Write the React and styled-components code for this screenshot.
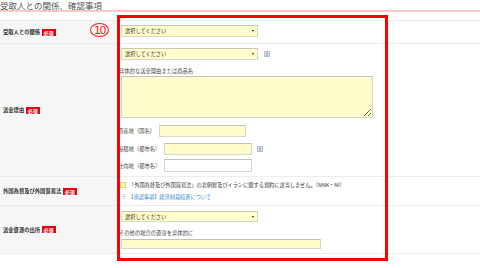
import React from "react";
import styled, { createGlobalStyle } from "styled-components";

const GlobalStyle = createGlobalStyle`
  html, body {
    margin: 0;
    padding: 0;
    background: #fff;
  }
  body {
    font-family: "Noto Sans CJK JP", "Noto Sans", sans-serif;
    color: #333;
  }
`;

const Page = styled.div`
  position: relative;
  width: 480px;
  height: 268px;
  overflow: hidden;
  background: #fff;
`;

const Title = styled.h2`
  margin: 0;
  height: 12px;
  box-sizing: border-box;
  border-bottom: 2px solid #f6c9c9;
  font-size: 8.5px;
  line-height: 10px;
  font-weight: 400;
  color: #555;
  white-space: nowrap;
`;

const Table = styled.div`
  margin-top: 8px;
  border-top: 1px solid #ececec;
`;

const Row = styled.div`
  display: grid;
  grid-template-columns: 118px 1fr;
  border-bottom: 1px solid #ececec;
`;

const Label = styled.div`
  display: flex;
  align-items: center;
  gap: 1.5px;
  padding-left: 3px;
  background: #f6f6f6;
  font-size: 5.3px;
  font-weight: 700;
  color: #333;
  white-space: nowrap;
`;

const Badge = styled.span`
  display: inline-block;
  background: #e60012;
  color: #fff;
  font-size: 5px;
  line-height: 7px;
  padding: 0 2px;
  font-weight: 700;
`;

const Cell = styled.div`
  display: flex;
  flex-direction: column;
  align-items: flex-start;
  padding: ${(p) => p.$pad || "4px 0 4px 3px"};
  font-size: 5.3px;
`;

const Line = styled.div`
  display: flex;
  align-items: center;
  gap: ${(p) => p.$gap || "6px"};
  margin-top: ${(p) => p.$mt || "0px"};
`;

const SelectBox = styled.div`
  position: relative;
  box-sizing: border-box;
  width: 137px;
  height: ${(p) => p.$h || "12px"};
  background: #fffdcc;
  border: 1px solid #d9d9c6;
  border-top-color: #c9c9b4;
  font-size: 5.2px;
  line-height: ${(p) => (p.$h ? `calc(${p.$h} - 2px)` : "10px")};
  padding-left: 3px;
  color: #333;
  &::after {
    content: "";
    position: absolute;
    right: 3px;
    top: 50%;
    margin-top: -1px;
    border-left: 1.5px solid transparent;
    border-right: 1.5px solid transparent;
    border-top: 2.5px solid #222;
  }
`;

const Help = styled.span`
  display: inline-flex;
  align-items: center;
  justify-content: center;
  width: 6px;
  height: 6px;
  box-sizing: border-box;
  border: 1px solid #b7c2cc;
  background: linear-gradient(#eef2f6, #c9d4de);
  color: #2f5f95;
  font-size: 4.5px;
  font-weight: 700;
  line-height: 1;
  margin-left: ${(p) => p.$ml || "0px"};
`;

const SubLabel = styled.div`
  margin-top: ${(p) => p.$mt || "0px"};
  margin-left: -2px;
  height: 9px;
  line-height: 9px;
  font-size: 5.3px;
  color: #444;
  white-space: nowrap;
`;

const Area = styled.textarea`
  display: block;
  box-sizing: border-box;
  width: 252px;
  height: 42px;
  margin: 0;
  background: #fffdcc;
  border: 1px solid #d6d6c4;
  border-top-color: #c4c4b0;
  resize: both;
  font-size: 5px;
`;

const Field = styled.input`
  box-sizing: border-box;
  width: ${(p) => p.$w || "88px"};
  height: ${(p) => p.$h || "12px"};
  margin: 0;
  margin-top: ${(p) => p.$mt || "0px"};
  padding: 0;
  background: ${(p) => (p.$white ? "#fff" : "#fffdcc")};
  border: 1px solid #d6d6cc;
  border-top-color: #c2c2b6;
`;

const FieldRow = styled.div`
  display: flex;
  align-items: center;
  margin-top: ${(p) => p.$mt || "0px"};
  margin-left: -3px;
  font-size: 5.3px;
  color: #444;
  white-space: nowrap;
`;

const FieldName = styled.span`
  width: ${(p) => p.$w};
`;

const Check = styled.span`
  display: inline-block;
  width: 4px;
  height: 4px;
  margin-left: -1px;
  background: #fff6b0;
  border: 1px solid #d8cf88;
`;

const Text = styled.span`
  font-size: 5.2px;
  color: #333;
  white-space: nowrap;
`;

const LinkLine = styled.div`
  margin-top: 4px;
  height: 9px;
  line-height: 9px;
  font-size: 5.2px;
  color: #3a8ed4;
  white-space: nowrap;
`;

const Note = styled.span`
  color: #8aa4bf;
  margin-right: 2px;
`;

const Circled = styled.div`
  position: absolute;
  left: 90px;
  top: 23px;
  width: 19px;
  height: 14px;
  box-sizing: border-box;
  border: 1.2px solid #ff1a1a;
  border-radius: 50%;
  display: flex;
  align-items: center;
  justify-content: center;
  color: #ff1a1a;
  font-family: "DejaVu Sans", sans-serif;
  font-size: 11px;
  letter-spacing: -1.5px;
  line-height: 1;
`;

const RedFrame = styled.div`
  position: absolute;
  left: 117px;
  top: 15px;
  width: 271px;
  height: 246px;
  box-sizing: border-box;
  border: 3px solid #ff0000;
  pointer-events: none;
`;

export default function App() {
  return (
    <Page>
      <GlobalStyle />
      <Title>受取人との関係、確認事項</Title>
      <Table>
        <Row>
          <Label>
            受取人との関係<Badge>必須</Badge>
          </Label>
          <Cell $pad="4px 0 6px 3px">
            <SelectBox>選択してください</SelectBox>
          </Cell>
        </Row>
        <Row>
          <Label>
            送金理由<Badge>必須</Badge>
          </Label>
          <Cell $pad="4px 0 4px 3px">
            <Line>
              <SelectBox>選択してください</SelectBox>
              <Help>?</Help>
            </Line>
            <SubLabel $mt="7px">具体的な送金理由または商品名</SubLabel>
            <Area readOnly />
            <FieldRow $mt="7px">
              <FieldName $w="41px">原産地（国名）</FieldName>
              <Field readOnly $w="87px" />
            </FieldRow>
            <FieldRow $mt="6px">
              <FieldName $w="46px">船積地（都市名）</FieldName>
              <Field readOnly />
              <Help $ml="5px">?</Help>
            </FieldRow>
            <FieldRow $mt="4px">
              <FieldName $w="46px">仕向地（都市名）</FieldName>
              <Field readOnly $white $h="13px" />
            </FieldRow>
          </Cell>
        </Row>
        <Row>
          <Label>
            外国為替及び外国貿易法<Badge>必須</Badge>
          </Label>
          <Cell $pad="4px 0 4px 3px">
            <Line $gap="3px">
              <Check />
              <Text>「外国為替及び外国貿易法」の北朝鮮及びイランに関する規約に該当しません。（NNK・NI）</Text>
            </Line>
            <LinkLine>
              <Note>※</Note>【承認事項】経済制裁措置について
            </LinkLine>
          </Cell>
        </Row>
        <Row>
          <Label>
            送金資源の出所<Badge>必須</Badge>
          </Label>
          <Cell $pad="5px 0 4px 3px">
            <SelectBox $h="11px">選択してください</SelectBox>
            <SubLabel $mt="7px">その他の場合の源泉を具体的に</SubLabel>
            <Field readOnly $w="200px" $h="10px" $mt="1px" />
          </Cell>
        </Row>
      </Table>
      <Circled>10</Circled>
      <RedFrame />
    </Page>
  );
}
